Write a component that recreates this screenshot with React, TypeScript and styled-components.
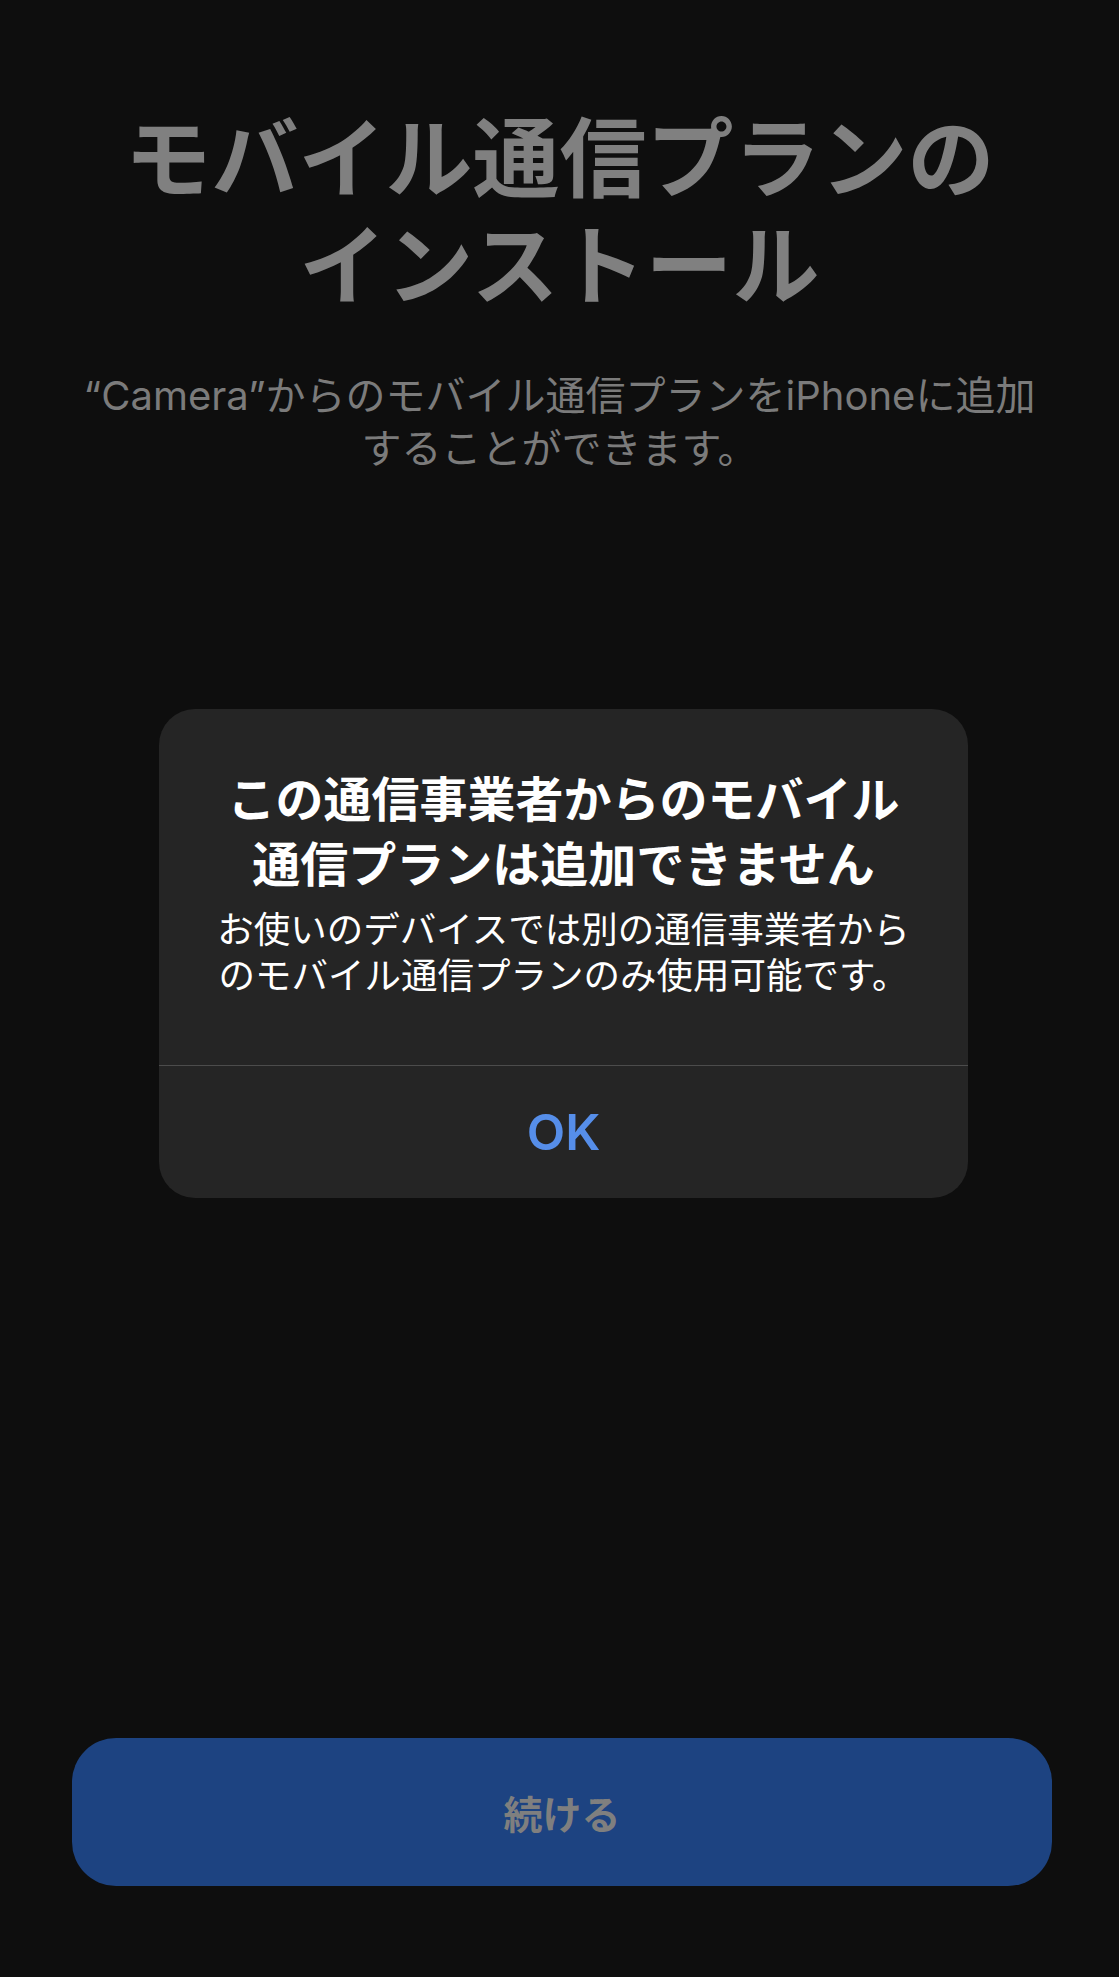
import React from 'react'
import styled, { createGlobalStyle } from 'styled-components'

const GlobalStyle = createGlobalStyle`
  html, body {
    margin: 0;
    padding: 0;
    background: #0e0e0e;
  }
  body {
    font-family: Inter, "Noto Sans CJK JP", "Noto Sans", sans-serif;
    -webkit-font-smoothing: antialiased;
  }
`

const App: React.FunctionComponent = () => (
    <Screen>
        <GlobalStyle />
        <Header>
            <Title>モバイル通信プランの<br />インストール</Title>
            <Subtitle>“Camera”からのモバイル通信プランをiPhoneに追加<br />することができます。</Subtitle>
        </Header>
        <Footer>
            <ContinueButton>続ける</ContinueButton>
        </Footer>
        <Alert role="alertdialog">
            <AlertBody>
                <AlertTitle>この通信事業者からのモバイル<br />通信プランは追加できません</AlertTitle>
                <AlertMessage>お使いのデバイスでは別の通信事業者から<br />のモバイル通信プランのみ使用可能です。</AlertMessage>
            </AlertBody>
            <AlertAction>OK</AlertAction>
        </Alert>
    </Screen>
)

export default App

const Screen = styled.div`
  position: relative;
  width: 1119px;
  height: 1977px;
  display: flex;
  flex-direction: column;
  justify-content: space-between;
  background: #0e0e0e;
  overflow: hidden;
`

const Header = styled.div`
  display: flex;
  flex-direction: column;
  align-items: center;
  gap: 49px;
  padding-top: 106px;
  text-align: center;
`

const Title = styled.h1`
  margin: 0;
  font-size: 87px;
  line-height: 107px;
  font-weight: 700;
  color: #808080;
`

const Subtitle = styled.p`
  margin: 0;
  font-size: 40px;
  line-height: 53px;
  font-weight: 400;
  color: #7b7b7b;
`

const Footer = styled.div`
  padding: 0 67px 91px 72px;
`

const ContinueButton = styled.button`
  width: 100%;
  height: 148px;
  border: none;
  border-radius: 44px;
  background: #1d4381;
  color: #7f7f7f;
  font-family: inherit;
  font-size: 39px;
  font-weight: 700;
`

const Alert = styled.div`
  position: absolute;
  top: 709px;
  left: 159px;
  width: 809px;
  border-radius: 36px;
  background: #252525;
  display: flex;
  flex-direction: column;
  overflow: hidden;
`

const AlertBody = styled.div`
  display: flex;
  flex-direction: column;
  align-items: center;
  gap: 10px;
  padding: 58px 30px 66px;
  text-align: center;
  border-bottom: 1.5px solid #4c4c4c;
`

const AlertTitle = styled.h2`
  margin: 0;
  font-size: 48px;
  line-height: 65px;
  font-weight: 700;
  color: #ffffff;
`

const AlertMessage = styled.p`
  margin: 0;
  font-size: 36.5px;
  line-height: 46px;
  font-weight: 400;
  color: #ffffff;
`

const AlertAction = styled.div`
  height: 132px;
  display: flex;
  align-items: center;
  justify-content: center;
  font-size: 50px;
  font-weight: 600;
  color: #568ee9;
`
